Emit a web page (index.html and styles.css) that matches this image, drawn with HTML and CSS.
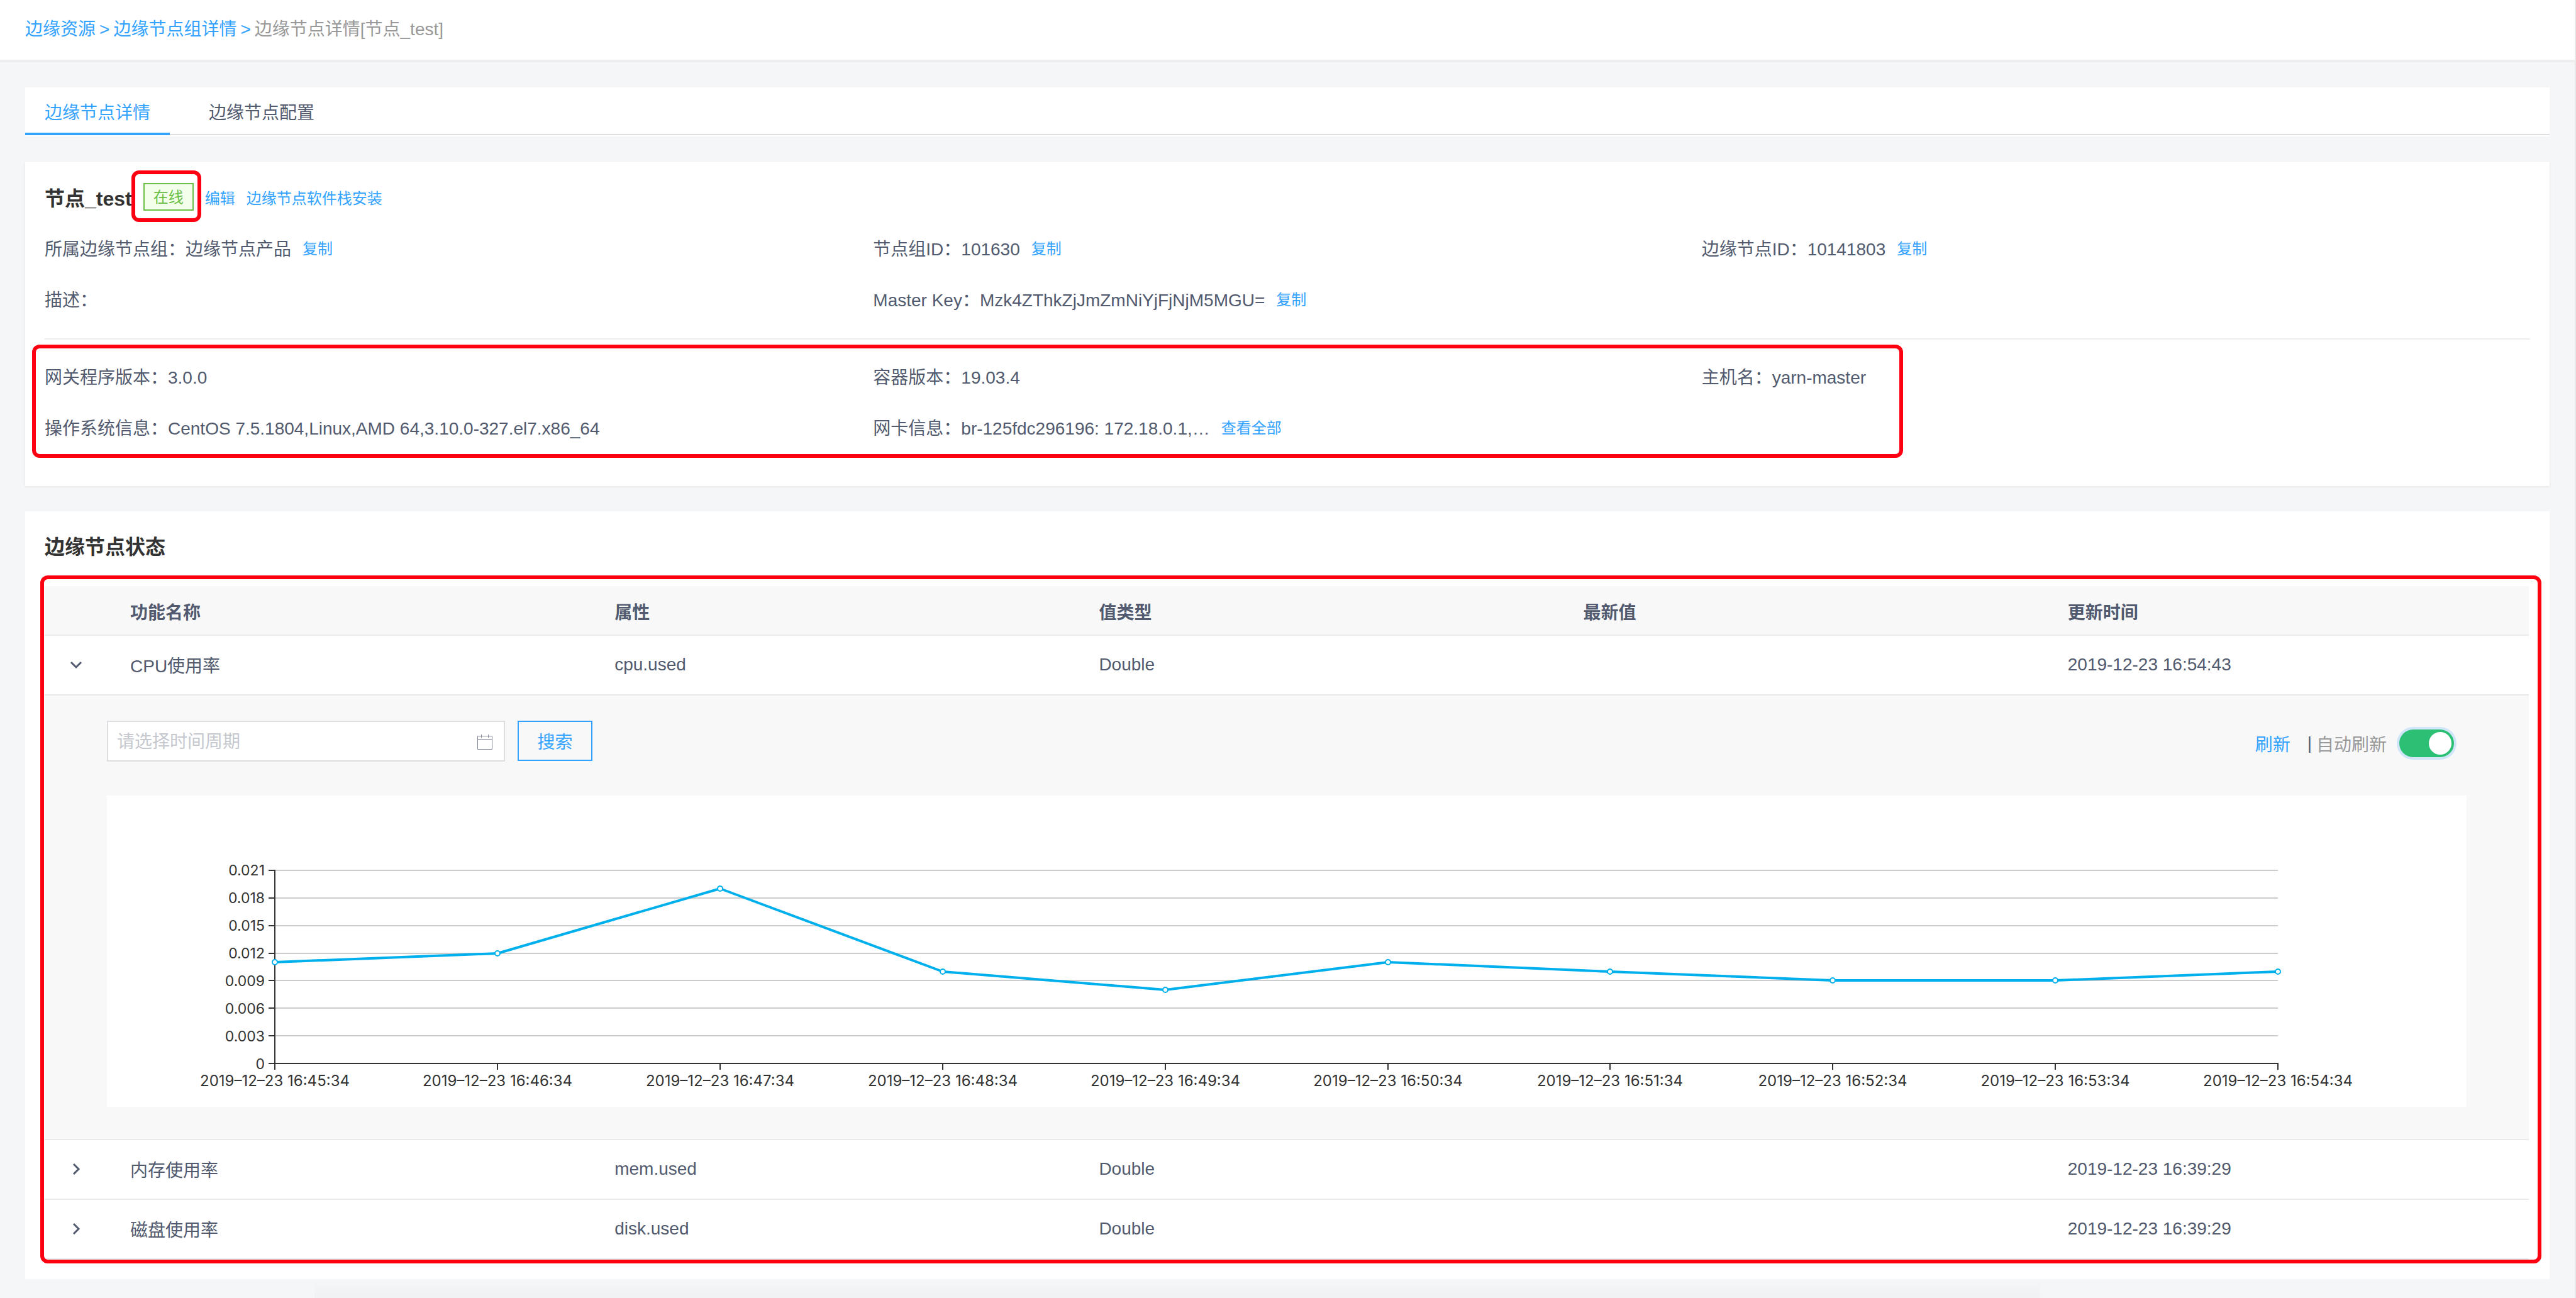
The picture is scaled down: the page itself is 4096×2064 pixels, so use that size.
FILE: index.html
```html
<!DOCTYPE html>
<html lang="zh-CN">
<head>
<meta charset="utf-8">
<title>边缘节点详情</title>
<link rel="stylesheet" href="styles.css">
</head>
<body>
<header class="topbar">
  <nav class="breadcrumb"><a href="#">边缘资源</a><span class="sep">&gt;</span><a href="#">边缘节点组详情</a><span class="sep">&gt;</span><span class="current">边缘节点详情[节点_test]</span></nav>
</header>
<main class="content">
  <nav class="tabs">
    <a class="tab active" href="#">边缘节点详情</a>
    <a class="tab" href="#">边缘节点配置</a>
  </nav>

  <section class="card info">
    <div class="info-head">
      <h1>节点_test</h1>
      <span class="tag-wrap"><span class="tag">在线</span><span class="mark mark-tag"></span></span>
      <a class="link" href="#">编辑</a>
      <a class="link" href="#">边缘节点软件栈安装</a>
    </div>
    <div class="fields">
      <div class="field"><span>所属边缘节点组：边缘节点产品</span><a class="link" href="#">复制</a></div>
      <div class="field"><span>节点组ID：101630</span><a class="link" href="#">复制</a></div>
      <div class="field"><span>边缘节点ID：10141803</span><a class="link" href="#">复制</a></div>
      <div class="field"><span>描述：</span></div>
      <div class="field"><span>Master Key：Mzk4ZThkZjJmZmNiYjFjNjM5MGU=</span><a class="link" href="#">复制</a></div>
    </div>
    <hr class="divider">
    <div class="fields">
      <div class="field"><span>网关程序版本：3.0.0</span></div>
      <div class="field"><span>容器版本：19.03.4</span></div>
      <div class="field"><span>主机名：yarn-master</span></div>
      <div class="field"><span>操作系统信息：CentOS 7.5.1804,Linux,AMD 64,3.10.0-327.el7.x86_64</span></div>
      <div class="field"><span>网卡信息：br-125fdc296196: 172.18.0.1,…</span><a class="link" href="#">查看全部</a></div>
      <span class="mark mark-versions"></span>
    </div>
  </section>

  <section class="card status">
    <h2>边缘节点状态</h2>
    <div class="table-wrap">
      <table class="table">
        <colgroup><col class="col-expand"><col><col><col><col><col></colgroup>
        <thead>
          <tr><th></th><th>功能名称</th><th>属性</th><th>值类型</th><th>最新值</th><th>更新时间</th></tr>
        </thead>
        <tbody>
          <tr>
            <td class="expand"><button class="toggle" type="button" aria-label="收起"><svg width="20" height="20" viewBox="0 0 20 20"><path d="M2 6L10 14L18 6"/></svg></button></td>
            <td>CPU使用率</td><td>cpu.used</td><td>Double</td><td></td><td>2019-12-23 16:54:43</td>
          </tr>
          <tr class="detail">
            <td colspan="6">
              <div class="toolbar">
                <label class="picker">
                  <input type="text" placeholder="请选择时间周期" aria-label="时间周期">
                  <svg width="24" height="24" viewBox="0 0 24 24"><path d="M.5 2.500H23.500V23.500H.5ZM.5 7.500H23.500M6.500 0V5M17.500 0V5"/></svg>
                </label>
                <button class="search" type="button">搜索</button>
                <div class="refresh">
                  <a class="refresh-link" href="#">刷新</a>
                  <span class="bar">|</span>
                  <label class="auto" for="auto">自动刷新</label>
                  <input class="switch" id="auto" type="checkbox" checked>
                </div>
              </div>
              <div class="chart">
                <svg viewBox="0 0 3752 495" role="img" aria-label="CPU使用率">
                  <path class="grid" d="M267 119H3452M267 163H3452M267 207H3452M267 251H3452M267 294H3452M267 338H3452M267 382H3452"/>
                  <path class="axis" d="M267 118V426M257 119H267M257 163H267M257 207H267M257 251H267M257 294H267M257 338H267M257 382H267M257 426H3453M267 426V436M621 426V436M975 426V436M1329 426V436M1683 426V436M2037 426V436M2390 426V436M2744 426V436M3098 426V436M3452 426V436"/>
                  <g class="ylabels">
                    <text x="251" y="127">0.021</text><text x="251" y="171">0.018</text><text x="251" y="215">0.015</text><text x="251" y="259">0.012</text><text x="251" y="303">0.009</text><text x="251" y="347">0.006</text><text x="251" y="391">0.003</text><text x="251" y="435">0</text>
                  </g>
                  <g class="xlabels">
                    <text x="267" y="462">2019–12–23 16:45:34</text><text x="621" y="462">2019–12–23 16:46:34</text><text x="975" y="462">2019–12–23 16:47:34</text><text x="1329" y="462">2019–12–23 16:48:34</text><text x="1683" y="462">2019–12–23 16:49:34</text><text x="2037" y="462">2019–12–23 16:50:34</text><text x="2390" y="462">2019–12–23 16:51:34</text><text x="2744" y="462">2019–12–23 16:52:34</text><text x="3098" y="462">2019–12–23 16:53:34</text><text x="3452" y="462">2019–12–23 16:54:34</text>
                  </g>
                  <polyline class="series" points="267,265 621,251 975,148 1329,280 1683,309 2037,265 2390,280 2744,294 3098,294 3452,280"/>
                  <g class="dots">
                    <circle cx="267" cy="265" r="4"/><circle cx="621" cy="251" r="4"/><circle cx="975" cy="148" r="4"/><circle cx="1329" cy="280" r="4"/><circle cx="1683" cy="309" r="4"/><circle cx="2037" cy="265" r="4"/><circle cx="2390" cy="280" r="4"/><circle cx="2744" cy="294" r="4"/><circle cx="3098" cy="294" r="4"/><circle cx="3452" cy="280" r="4"/>
                  </g>
                </svg>
              </div>
            </td>
          </tr>
          <tr>
            <td class="expand"><button class="toggle" type="button" aria-label="展开"><svg width="20" height="20" viewBox="0 0 20 20"><path d="M6 2L14 10L6 18"/></svg></button></td>
            <td>内存使用率</td><td>mem.used</td><td>Double</td><td></td><td>2019-12-23 16:39:29</td>
          </tr>
          <tr>
            <td class="expand"><button class="toggle" type="button" aria-label="展开"><svg width="20" height="20" viewBox="0 0 20 20"><path d="M6 2L14 10L6 18"/></svg></button></td>
            <td>磁盘使用率</td><td>disk.used</td><td>Double</td><td></td><td>2019-12-23 16:39:29</td>
          </tr>
        </tbody>
      </table>
      <span class="mark mark-table"></span>
    </div>
  </section>
</main>
</body>
</html>
```
FILE: styles.css
```css
* {
  box-sizing: border-box;
}

body {
  margin: 0;
  min-height: 100vh;
  background: #f4f6f8;
  color: #515a6e;
  font-family: "Liberation Sans", "Noto Sans CJK SC", sans-serif;
  font-size: 28px;
}

a {
  color: #33a3ff;
  text-decoration: none;
}

button,
input {
  font: inherit;
}

.topbar {
  height: 99px;
  padding: 0 40px;
  background: #fff;
  border-right: 2px solid #e8e8e8;
  border-bottom: 4px solid #ededed;
}

.breadcrumb {
  display: flex;
  gap: 6px;
  line-height: 93px;
}

.sep {
  color: #33a3ff;
}

.current {
  color: #999;
}

.content {
  padding: 40px 40px 30px;
  border-right: 2px solid #e8e8e8;
  background: linear-gradient(rgba(0, 0, 0, 0), rgba(0, 0, 0, 0.02)) 37% 100% / 67% 30px no-repeat;
}

.tabs {
  display: flex;
  gap: 31px;
  height: 78px;
  background: #fff;
  box-shadow: inset 0 -2px #fff, inset 0 -4px #dcdee2;
}

.tab {
  height: 76px;
  padding: 0 31px;
  line-height: 82px;
  color: #515a6e;
}

.tab.active {
  color: #33a3ff;
  border-bottom: 4px solid #33a3ff;
}

.card {
  background: #fff;
}

.info {
  margin-top: 40px;
  padding: 16px 31px 54px;
  box-shadow: 0 1px 4px rgba(0, 0, 0, 0.08);
}

.info-head {
  display: flex;
  align-items: center;
  gap: 18px;
  height: 80px;
}

h1,
h2 {
  margin: 0;
  font-size: 32px;
  font-weight: bold;
  color: #333;
}

.tag-wrap {
  position: relative;
  display: flex;
}

.tag {
  height: 44px;
  padding: 0 14px;
  border: 2px solid #6abf47;
  background: #f3ffeb;
  color: #6abf47;
  font-size: 24px;
  line-height: 42px;
}

.link {
  font-size: 24px;
}

.fields {
  position: relative;
  display: grid;
  grid-template-columns: repeat(3, 1fr);
  grid-auto-rows: 81px;
}

.field {
  display: flex;
  align-items: center;
  gap: 18px;
  white-space: nowrap;
}

.divider {
  height: 2px;
  margin: 23px 0 17px;
  border: 0;
  background: #ededed;
}

.mark {
  position: absolute;
  border: 6px solid #ff0012;
  border-radius: 12px;
  pointer-events: none;
}

.mark-tag {
  inset: -20px -12px -18px -19px;
}

.mark-versions {
  top: -9px;
  bottom: -9px;
  left: -20px;
  width: calc(75% + 11px);
}

.mark-table {
  inset: -17px -20px -6px -7px;
}

.status {
  margin-top: 40px;
  padding: 0 33px 31px 31px;
}

h2 {
  padding-bottom: 5px;
  line-height: 114px;
}

.table-wrap {
  position: relative;
}

.table {
  width: 100%;
  table-layout: fixed;
  border-collapse: separate;
  border-spacing: 0;
}

.col-expand {
  width: 99px;
}

.table th,
.table td {
  height: 95px;
  padding: 0 37px 2px;
  border-bottom: 2px solid #e8eaec;
  text-align: left;
}

.table th {
  height: 79px;
  padding: 2px 37px 0;
  background: #f8f8f9;
}

.table .expand {
  padding: 0;
  text-align: center;
}

.toggle {
  display: inline-flex;
  padding: 0;
  border: 0;
  background: none;
}

.toggle path {
  fill: none;
  stroke: #515a6e;
  stroke-width: 3;
}

.table .detail td {
  padding: 40px 99px 51px;
  background: #f8f8f9;
}

.toolbar {
  display: flex;
  align-items: flex-start;
  gap: 20px;
  height: 119px;
}

.picker {
  display: flex;
  align-items: center;
  width: 633px;
  height: 65px;
  padding: 2px 18px 0 14px;
  border: 2px solid #dcdee2;
  background: #fff;
}

.picker input {
  flex: 1;
  min-width: 0;
  padding: 0;
  border: 0;
  outline: 0;
  background: none;
}

.picker input::placeholder {
  color: #c5c8ce;
}

.picker path {
  fill: none;
  stroke: #808695;
  stroke-width: 1;
}

.search {
  width: 119px;
  height: 64px;
  padding: 0;
  border: 2px solid #33a3ff;
  background: transparent;
  color: #33a3ff;
}

.refresh {
  display: flex;
  align-items: center;
  height: 72px;
  margin: 0 20px 0 auto;
}

.bar {
  margin: 0 7px 0 27px;
}

.auto {
  color: #999;
}

.switch {
  appearance: none;
  display: flex;
  justify-content: flex-end;
  width: 87px;
  height: 44px;
  margin: 0 0 0 20px;
  padding: 4px;
  border-radius: 22px;
  background: #2bc074;
  box-shadow: 0 0 0 4px #d0e6f8;
}

.switch::before {
  content: "";
  width: 36px;
  height: 36px;
  border-radius: 50%;
  background: #fff;
}

.chart {
  background: #fff;
}

.chart svg {
  display: block;
  width: 100%;
}

.grid {
  stroke: #ccc;
  stroke-width: 2;
}

.axis {
  fill: none;
  stroke: #333;
  stroke-width: 2;
}

.chart text {
  font-family: Inter, sans-serif;
  fill: #333;
}

.ylabels {
  font-size: 23px;
  text-anchor: end;
}

.xlabels {
  font-size: 24px;
  text-anchor: middle;
}

.series {
  fill: none;
  stroke: #00b0ec;
  stroke-width: 4;
  stroke-linejoin: bevel;
}

.dots circle {
  fill: #fff;
  stroke: #00b0ec;
  stroke-width: 2;
}
```
